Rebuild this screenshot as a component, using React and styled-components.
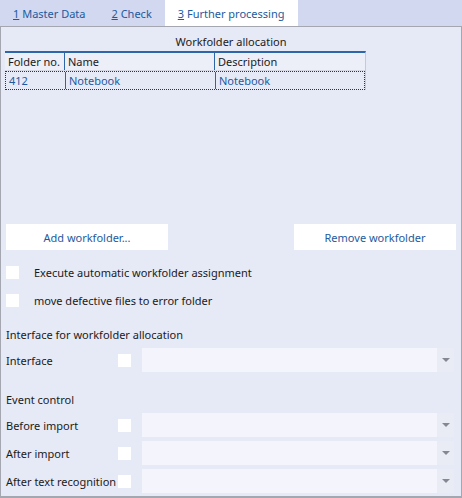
import React from 'react';
import styled, { createGlobalStyle } from 'styled-components';

const GlobalStyle = createGlobalStyle`
  html, body {
    margin: 0;
    padding: 0;
    background: #d1d8f0;
  }
  body {
    font-family: "Noto Sans", "Open Sans", sans-serif;
    font-size: 11px;
    color: #1b1b1b;
  }
`;

const Window = styled.div`
  width: 462px;
  height: 498px;
  display: flex;
  flex-direction: column;
  background: #d1d8f0;
`;

const TabBar = styled.div`
  display: flex;
  height: 26px;
  flex: none;
`;

const Tab = styled.div`
  display: flex;
  align-items: center;
  padding: 0 13px;
  background: ${(p) => (p.active ? '#ffffff' : 'transparent')};
  color: #1e5a9e;
  white-space: nowrap;
  u {
    text-decoration: underline;
  }
`;

const Panel = styled.div`
  flex: 1;
  border: 1px solid #a4a7b0;
  border-bottom-width: 2px;
  background: #e6e9f6;
  display: flex;
  flex-direction: column;
  padding: 5px 5px 0 5px;
`;

const Title = styled.div`
  text-align: center;
  height: 19px;
  line-height: 19px;
`;

const Table = styled.div`
  width: 360px;
  margin-left: -1px;
  border-top: 2px solid #2d67aa;
  border-right: 1px solid #c7cad3;
  display: flex;
  flex-direction: column;
`;

const Row = styled.div`
  display: grid;
  grid-template-columns: 59px 150px 151px;
  height: 17px;
  line-height: 17px;
  color: ${(p) => (p.head ? '#1b1b1b' : '#1e5a9e')};
  background: ${(p) => (p.head ? '#eceef8' : 'transparent')};
  border: ${(p) => (p.focus ? '1px dotted #333' : 'none')};
  border-bottom: ${(p) => (p.focus ? '1px dotted #333' : '1px solid #d6d9e4')};
`;

const Cell = styled.div`
  padding-left: 3px;
  white-space: nowrap;
  overflow: hidden;
  border-left: ${(p) => (p.first ? 'none' : '1px solid #2d67aa')};
`;

const Spacer = styled.div`
  height: 134px;
`;

const ButtonRow = styled.div`
  display: flex;
  justify-content: space-between;
  margin-bottom: 8px;
`;

const Button = styled.div`
  width: 162px;
  height: 26px;
  background: #ffffff;
  color: #1e5a9e;
  display: flex;
  align-items: center;
  justify-content: center;
`;

const CheckRow = styled.label`
  display: flex;
  align-items: center;
  height: 28px;
  gap: 15px;
`;

const Box = styled.span`
  width: 13px;
  height: 13px;
  background: #ffffff;
  flex: none;
`;

const Section = styled.div`
  height: 22px;
  line-height: 22px;
  margin-top: ${(p) => p.top || 0}px;
`;

const FieldRow = styled.div`
  display: grid;
  grid-template-columns: 112px 24px 312px;
  align-items: center;
  height: 28px;
`;

const Label = styled.span`
  white-space: nowrap;
`;

const Combo = styled.div`
  height: 24px;
  background: #f4f5fc;
  display: flex;
  justify-content: flex-end;
`;

const Arrow = styled.div`
  width: 17px;
  background: #eaecf5;
  display: flex;
  align-items: center;
  justify-content: center;
  &::after {
    content: '';
    border-left: 4px solid transparent;
    border-right: 4px solid transparent;
    border-top: 4px solid #858893;
  }
`;

const Field = ({ label }) => (
  <FieldRow>
    <Label>{label}</Label>
    <Box />
    <Combo>
      <Arrow />
    </Combo>
  </FieldRow>
);

const App = () => (
  <Window>
    <GlobalStyle />
    <TabBar>
      <Tab>
        <span><u>1</u> Master Data</span>
      </Tab>
      <Tab>
        <span><u>2</u> Check</span>
      </Tab>
      <Tab active>
        <span><u>3</u> Further processing</span>
      </Tab>
    </TabBar>
    <Panel>
      <Title>Workfolder allocation</Title>
      <Table>
        <Row head>
          <Cell first>Folder no.</Cell>
          <Cell>Name</Cell>
          <Cell>Description</Cell>
        </Row>
        <Row focus>
          <Cell first>412</Cell>
          <Cell>Notebook</Cell>
          <Cell>Notebook</Cell>
        </Row>
      </Table>
      <Spacer />
      <ButtonRow>
        <Button>Add workfolder...</Button>
        <Button>Remove workfolder</Button>
      </ButtonRow>
      <CheckRow>
        <Box />
        Execute automatic workfolder assignment
      </CheckRow>
      <CheckRow>
        <Box />
        move defective files to error folder
      </CheckRow>
      <Section top={10}>Interface for workfolder allocation</Section>
      <Field label="Interface" />
      <Section top={15}>Event control</Section>
      <Field label="Before import" />
      <Field label="After import" />
      <Field label="After text recognition" />
    </Panel>
  </Window>
);

export default App;
